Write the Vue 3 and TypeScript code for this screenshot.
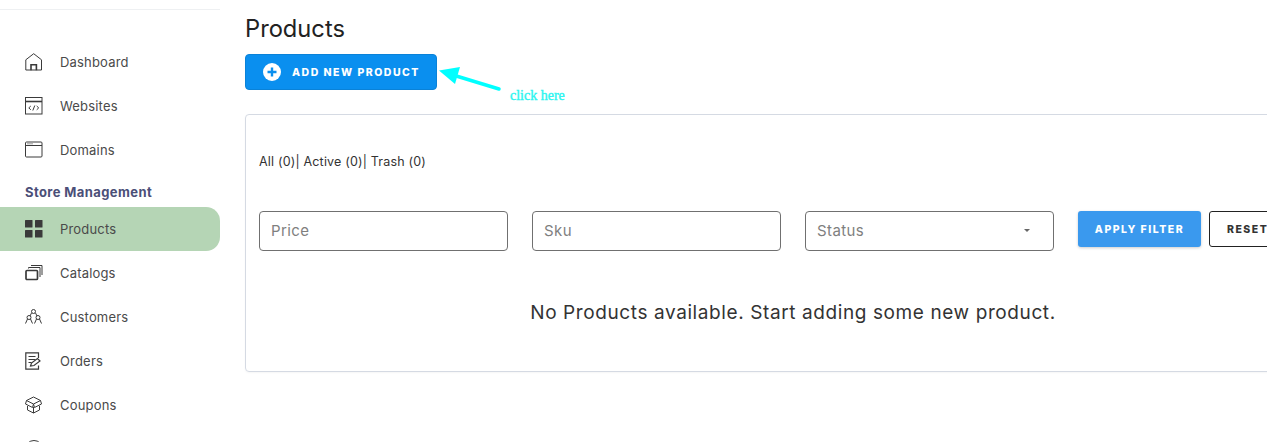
<script setup lang="ts">
const before = [
  { label: 'Dashboard', icon: 'home' },
  { label: 'Websites', icon: 'code' },
  { label: 'Domains', icon: 'window' },
]
const after = [
  { label: 'Catalogs', icon: 'stack' },
  { label: 'Customers', icon: 'people' },
  { label: 'Orders', icon: 'order' },
  { label: 'Coupons', icon: 'box' },
]
const filters = ['Price', 'Sku']
</script>

<template>
  <div class="page">
    <aside class="sidebar">
      <div class="brand"></div>
      <nav class="nav">
        <a v-for="item in before" :key="item.label" class="item">
          <svg class="icon" viewBox="0 0 18 18" fill="none" stroke="#3a3a3a" stroke-width="1">
            <template v-if="item.icon === 'home'">
              <path d="M.8 17V6.800L8.700.7l7.800 6.100V17z" />
              <path d="M6 17.200v-5.400h5.400v5.400" stroke-width="1.600" />
            </template>
            <template v-else-if="item.icon === 'code'">
              <rect x=".5" y=".5" width="16.500" height="16.500" />
              <path d="M.5 4.500h16.500" stroke-width="1.600" />
              <path d="M5.800 9l-2 1.900 2 1.900M11.700 9l2 1.900-2 1.900M9.800 8.500l-2 5" />
            </template>
            <template v-else>
              <rect x=".5" y="1" width="16.500" height="15" rx="1" />
              <path d="M.5 4.500h16.500" />
              <path d="M2.500 2.800h5" stroke-dasharray="1 1" />
            </template>
          </svg>
          <span>{{ item.label }}</span>
        </a>
        <div class="section">Store Management</div>
        <a class="item active">
          <svg class="icon" viewBox="0 0 18 18" fill="#3a3a3a">
            <rect x="0" y="0" width="7.500" height="7.500" rx=".5" />
            <rect x="10" y="0" width="7.500" height="7.500" rx=".5" />
            <rect x="0" y="10" width="7.500" height="7.500" rx=".5" />
            <rect x="10" y="10" width="7.500" height="7.500" rx=".5" />
          </svg>
          <span>Products</span>
        </a>
        <a v-for="item in after" :key="item.label" class="item">
          <svg class="icon" viewBox="0 0 18 18" fill="none" stroke="#3a3a3a" stroke-width="1">
            <template v-if="item.icon === 'stack'">
              <rect x="1" y="6.500" width="11.500" height="9" rx="1" stroke-width="1.700" />
              <path d="M3.500 4.500V3.500H15V13M6 1.500h11V11" />
            </template>
            <template v-else-if="item.icon === 'people'">
              <circle cx="8.500" cy="3.500" r="2" />
              <circle cx="4" cy="9.500" r="2" />
              <circle cx="13" cy="9.500" r="2" />
              <path d="M.5 15.500L2.500 11M5.500 11l2 4.500M9.500 15.500l2-4.500M14.500 11l2 4.500M6.500 5l-1.500 3M10.500 5l1.500 3" />
            </template>
            <template v-else-if="item.icon === 'order'">
              <path d="M13.500 6V.8H.8v16.400h12.700V13.500" stroke-width="1.200" />
              <path d="M3.500 4.500h7M3.500 7.500h7M3.500 10.500h3" />
              <path d="M5.500 14l1-3 6-4.500 2.500 2.500-6 4.500z" stroke-width="1.200" />
            </template>
            <template v-else>
              <path d="M8.500 1l7 3.500-7 3.500-7-3.500z" />
              <path d="M1.500 4.500L.5 8l7 3.500 1-3.500 1 3.500 7-3.500-1-3.500" />
              <path d="M2.500 10v4l6 3 6-3v-4M8.500 11v6" />
            </template>
          </svg>
          <span>{{ item.label }}</span>
        </a>
        <a class="item">
          <svg class="icon" viewBox="0 0 18 18" fill="none" stroke="#3a3a3a">
            <circle cx="9" cy="9" r="8.500" />
          </svg>
        </a>
      </nav>
    </aside>

    <main class="main">
      <h1 class="title">Products</h1>
      <div class="add-row">
        <button class="add" type="button">
          <svg class="plus" viewBox="0 0 18 18">
            <circle cx="9" cy="9" r="9" fill="#fff" />
            <path d="M9 4.500v9M4.500 9h9" stroke="#0a8fef" stroke-width="2.400" />
          </svg>
          ADD NEW PRODUCT
        </button>
        <svg class="arrow" viewBox="0 0 70 40" width="70" height="40">
          <path d="M14 10L60 24" stroke="#00ffff" stroke-width="3.500" stroke-linecap="round" />
          <path d="M0 5.500L21 2 16 19z" fill="#00ffff" />
        </svg>
        <span class="hint">click here</span>
      </div>

      <section class="card">
        <div class="tabs">All (0)| Active (0)| Trash (0)</div>
        <div class="filters">
          <div v-for="f in filters" :key="f" class="field">{{ f }}</div>
          <div class="field select">
            <span>Status</span>
            <i class="caret"></i>
          </div>
          <button class="apply" type="button">APPLY FILTER</button>
          <button class="reset" type="button">RESET</button>
        </div>
        <p class="empty">No Products available. Start adding some new product.</p>
      </section>
    </main>
  </div>
</template>

<style>
html, body { margin: 0; overflow: hidden; background: #fff; }
</style>

<style scoped>
.page {
  display: flex;
  width: 1267px;
  height: 442px;
  overflow: hidden;
  font-family: Inter, "Noto Sans", sans-serif;
  color: #333;
}
.sidebar { flex: 0 0 220px; width: 220px; }
.brand { height: 9px; border-bottom: 1px solid #eef0f2; }
.nav { padding-top: 30px; display: flex; flex-direction: column; }
.item {
  display: flex;
  align-items: center;
  flex: 0 0 44px;
  height: 44px;
  padding-left: 25px;
  gap: 17px;
  font-size: 13px;
  letter-spacing: .18px;
  color: #4a4a4a;
}
.item.active { background: #b5d5b5; border-radius: 0 14px 14px 0; }
.icon { width: 18px; height: 18px; flex: none; }
.section {
  height: 35px;
  padding: 12px 0 0 25px;
  box-sizing: border-box;
  font-size: 13px;
  line-height: 17px;
  font-weight: 700;
  letter-spacing: .4px;
  color: #4b4f78;
}
.main { flex: none; width: 1100px; padding-left: 25px; box-sizing: border-box; }
.title {
  margin: 0;
  padding-top: 15px;
  height: 54px;
  box-sizing: border-box;
  font-size: 23.700px;
  line-height: 28px;
  font-weight: 400;
  color: #222;
}
.add-row { position: relative; height: 36px; }
.add {
  display: flex;
  align-items: center;
  gap: 11px;
  width: 192px;
  height: 36px;
  padding: 0 0 0 17px;
  box-sizing: border-box;
  border: 1px solid #0a82d8;
  border-radius: 4px;
  background: #0a8fef;
  color: #fff;
  font-family: inherit;
  font-size: 10.500px;
  font-weight: 800;
  letter-spacing: 1.500px;
}
.plus { width: 18px; height: 18px; flex: none; }
.arrow { position: absolute; left: 194px; top: 11px; }
.hint {
  position: absolute;
  left: 265px;
  top: 33px;
  font-family: "Liberation Serif", serif;
  font-size: 14px;
  line-height: 17px;
  color: #2cf5f0;
  -webkit-text-stroke: 0.400px #2cf5f0;
}
.card {
  width: 1060px;
  height: 258px;
  margin-top: 24px;
  padding: 39px 13px 0;
  box-sizing: border-box;
  border: 1px solid #d5dae3;
  border-radius: 4px;
  box-shadow: 0 1px 2px rgba(0, 0, 0, .04);
}
.tabs { font-size: 12.500px; line-height: 16px; letter-spacing: .18px; color: #333; }
.filters { display: flex; align-items: flex-start; gap: 24px; margin-top: 41px; }
.field {
  flex: none;
  width: 249px;
  height: 40px;
  padding: 0 11px 2px;
  box-sizing: border-box;
  display: flex;
  align-items: center;
  border: 1px solid #707070;
  border-radius: 4px;
  font-size: 15px;
  letter-spacing: .4px;
  color: #7f7f7f;
}
.select { justify-content: space-between; }
.caret {
  width: 0;
  height: 0;
  margin-right: 12px;
  border: 3px solid transparent;
  border-top: 3px solid #666;
  border-bottom: 0;
}
.apply, .reset {
  flex: none;
  height: 36px;
  border-radius: 3px;
  font-family: inherit;
  font-size: 10.500px;
  font-weight: 800;
  letter-spacing: 1.500px;
  padding: 0;
}
.apply {
  width: 123px;
  border: 0;
  background: #3a99ee;
  color: #fff;
  box-shadow: 0 1px 3px rgba(0, 0, 0, .2);
}
.reset {
  width: 100px;
  margin-left: -16px;
  border: 1px solid #222;
  background: #fff;
  color: #333;
  text-align: left;
  padding-left: 17px;
}
.empty {
  margin: 51px 0 0;
  width: 1068px;
  text-align: center;
  font-size: 19px;
  line-height: 22px;
  letter-spacing: .6px;
  color: #333;
}
</style>
